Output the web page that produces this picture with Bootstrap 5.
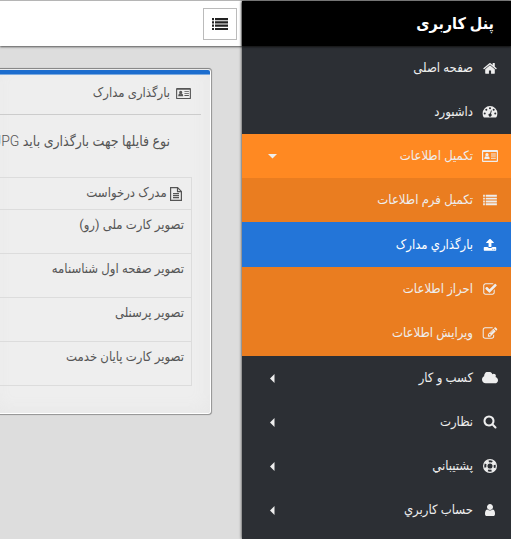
<!DOCTYPE html>
<html lang="fa" dir="rtl">
<head>
<meta charset="utf-8">
<meta name="viewport" content="width=device-width, initial-scale=1">
<title>پنل کاربری</title>
<link href="https://cdn.jsdelivr.net/npm/bootstrap@5.3.0/dist/css/bootstrap.min.css" rel="stylesheet">
<style>
body{font-family:Roboto,"DejaVu Sans Condensed","DejaVu Sans",sans-serif;font-size:13px;line-height:20px;background:#ddd;color:#555;overflow:hidden}
.shell{border-top:1px solid #b5b5b5}
.side{width:269px;background:#2c2f34;box-shadow:0 0 3px #222}
.brand{height:45px;background:#000;color:#fff;font-size:16px;font-weight:700;padding:0 17px;box-shadow:0 1px 2px #111}
.side-link{height:44px;color:#eee;text-decoration:none;padding:0 13px;gap:9px}
.side-link:hover{color:#fff}
.side-link svg{width:16px;height:12px;fill:currentColor}
.side-link .tall-icon{height:14px}
.side-link .caret{width:9px;height:9px;margin-inline-start:auto;margin-inline-end:13px}
.open-item{background:#ff8922}
.sub-menu{background:#ea7d20;padding-bottom:1px}
.current-item{height:45px;background:#2375d8;color:#fff}
.topbar{height:45px;background:#fff;box-shadow:0 1px 2px #555;padding:0 5px}
.toggle-btn{width:34px;height:32px;background:#fff;border:1px solid #bbb;color:#222}
.panel-box{margin:22px 0 0 0;margin-inline-start:30px;background:#eee;border:1px solid #999;border-top-color:#888;border-left:0;border-radius:0 4px 4px 0;box-shadow:inset -1px 0 #fff,inset 0 -1px #fff,inset -4px -4px 16px #e8e8e8,0 0 1px #999;padding-bottom:28px}
.panel-bar{height:5px;background:#1c6dce;border-bottom:1px solid #7ba9de;margin:1px 0 0;margin-inline-start:1px;border-radius:0 2px 0 0}
.panel-title{height:40px;font-size:13px;font-weight:400;border-bottom:1px solid #ccc;margin-inline-start:10px;padding-inline-start:10px;padding-bottom:3px;gap:6px}
.panel-title svg{width:15px;height:13px;fill:currentColor}
.note{font-size:14px;font-weight:300;padding-inline-start:41px;margin:16px 0 26px;white-space:nowrap}
.docs{margin:0;margin-inline-start:19px;width:calc(100% - 19px);border-collapse:collapse}
.docs th,.docs td{border:1px solid #dcdcdc;border-left:0;padding:5px 7px;vertical-align:top;font-weight:400;white-space:nowrap}
.docs th{height:32px;padding:5px 9px}
.docs td{height:44px}
.docs svg{width:12px;height:14px}
</style>
<script src="https://cdn.jsdelivr.net/npm/bootstrap@5.3.0/dist/js/bootstrap.bundle.min.js"></script>
</head>
<body>
<svg class="d-none" aria-hidden="true">
<symbol id="list" viewBox="0 0 16 14"><path d="M0 1h2v2.200H0zM3 1h13v2.200H3zM0 4.300h2v2.200H0zM3 4.300h13v2.200H3zM0 7.600h2v2.200H0zM3 7.600h13v2.200H3zM0 10.900h2v2.200H0zM3 10.900h13v2.200H3z"/></symbol>
<symbol id="idcard" viewBox="0 0 16 14"><path fill-rule="evenodd" d="M1 1h14q1 0 1 1v10q0 1-1 1H1q-1 0-1-1V2q0-1 1-1zM1.200 3v8.800h13.600V3zM5 4.100a1.700 1.700 0 1 1 0 3.400 1.700 1.700 0 0 1 0-3.400zM3.500 7.300q1.500 1 3 0 1.200.5 1.200 2.700H2.300q0-2.200 1.200-2.700zM9 4.500h4.800v1H9zM9 6.600h4.800v1H9zM9 8.700h4.800v1H9z"/></symbol>
<symbol id="home" viewBox="64 128 1664 1440"><path d="M1472 992v480q0 26-19 45t-45 19h-384v-384h-256v384h-384q-26 0-45-19t-19-45v-480q0-1 .5-3t.5-3l575-474 575 474q1 2 1 6zm223-69l-62 74q-8 9-21 11h-3q-13 0-21-7l-692-577-692 577q-12 8-24 7-13-2-21-11l-62-74q-8-10-7-23.500t11-21.500l719-599q32-26 76-26t76 26l244 204v-195q0-14 9-23t23-9h192q14 0 23 9t9 23v408l219 182q10 8 11 21.500t-7 23.500z"/></symbol>
<symbol id="gauge" viewBox="0 1 16 13"><path fill-rule="evenodd" d="M8 1a8 8 0 0 1 8 8q0 2.300-1.200 4.200-.2.300-.6.300H1.800q-.4 0-.6-.3Q0 11.300 0 9a8 8 0 0 1 8-8zM2.300 8a1.100 1.100 0 1 0 0 2.200 1.100 1.100 0 0 0 0-2.200zM4 4a1.100 1.100 0 1 0 0 2.200A1.100 1.100 0 0 0 4 4zM8 2.300a1.100 1.100 0 1 0 0 2.200 1.100 1.100 0 0 0 0-2.200zM12 4a1.100 1.100 0 1 0 0 2.200A1.100 1.100 0 0 0 12 4zM13.700 8a1.100 1.100 0 1 0 0 2.200 1.100 1.100 0 0 0 0-2.200zM9 5.800l-.9 3.300a1.700 1.700 0 1 0 1 .3L10 6z"/></symbol>
<symbol id="upload" viewBox="64 96 1664 1600"><path d="M1344 1472q0-26-19-45t-45-19-45 19-19 45 19 45 45 19 45-19 19-45zm256 0q0-26-19-45t-45-19-45 19-19 45 19 45 45 19 45-19 19-45zm128-224v320q0 40-28 68t-68 28h-1472q-40 0-68-28t-28-68v-320q0-40 28-68t68-28h427q21 56 70.500 92t110.500 36h256q61 0 110.500-36t70.500-92h427q40 0 68 28t28 68zm-325-648q-17 40-59 40h-256v448q0 26-19 45t-45 19h-256q-26 0-45-19t-19-45v-448h-256q-42 0-59-40-17-39 14-69l448-448q18-19 45-19t45 19l448 448q31 30 14 69z"/></symbol>
<symbol id="check" viewBox="0 96 1792 1472"><path d="M1472 930v318q0 119-84.500 203.500t-203.500 84.500h-832q-119 0-203.500-84.500t-84.500-203.500v-832q0-119 84.500-203.500t203.500-84.500h832q63 0 117 25 15 7 18 23 3 17-9 29l-49 49q-10 10-23 10-3 0-9-2-23-6-45-6h-832q-66 0-113 47t-47 113v832q0 66 47 113t113 47h832q66 0 113-47t47-113v-254q0-13 9-22l64-64q10-10 23-10 6 0 12 3 20 8 20 29zm231-489l-814 814q-24 24-57 24t-57-24l-430-430q-24-24-24-57t24-57l110-110q24-24 57-24t57 24l263 263 647-647q24-24 57-24t57 24l110 110q24 24 24 57t-24 57z"/></symbol>
<symbol id="edit" viewBox="0 96 1792 1472"><path d="M888 1184l116-116-152-152-116 116v56h96v96h56zm440-720q-16-16-33 1l-350 350q-17 17-1 33t33-1l350-350q17-17 1-33zm80 594v190q0 119-84.500 203.500t-203.500 84.500h-832q-119 0-203.500-84.500t-84.500-203.500v-832q0-119 84.500-203.500t203.500-84.500h832q63 0 117 25 15 7 18 23 3 17-9 29l-49 49q-14 14-32 8-23-6-45-6h-832q-66 0-113 47t-47 113v832q0 66 47 113t113 47h832q66 0 113-47t47-113v-126q0-13 9-22l64-64q15-15 35-7t20 29zm-96-738l288 288-672 672h-288v-288zm444 132l-92 92-288-288 92-92q28-28 68-28t68 28l152 152q28 28 28 68t-28 68z"/></symbol>
<symbol id="cloud" viewBox="64 256 1920 1280"><path d="M1984 1152q0 159-112.500 271.500t-271.500 112.500h-1088q-185 0-316.500-131.500t-131.500-316.500q0-132 71-241.500t187-163.500q-2-28-2-43 0-212 150-362t362-150q158 0 286.500 88t187.500 230q70-62 166-62 106 0 181 75t75 181q0 75-41 138 129 30 213 134.500t84 239.500z"/></symbol>
<symbol id="search" viewBox="0 64 1792 1792"><path d="M1216 832q0-185-131.500-316.500t-316.500-131.500-316.500 131.500-131.500 316.500 131.500 316.500 316.500 131.500 316.500-131.500 131.500-316.500zm512 832q0 52-38 90t-90 38q-54 0-90-38l-343-342q-179 124-399 124-143 0-273.500-55.500t-225-150-150-225-55.500-273.500 55.500-273.500 150-225 225-150 273.500-55.500 273.500 55.500 225 150 150 225 55.500 273.500q0 220-124 399l343 343q37 37 37 90z"/></symbol>
<symbol id="ring" viewBox="0 0 16 16"><g fill="none" stroke="currentColor"><circle cx="8" cy="8" r="7.300" stroke-width="1.400"/><circle cx="8" cy="8" r="3.600" stroke-width="1.400"/><circle cx="8" cy="8" r="5.500" stroke-width="3.400" stroke-dasharray="4.320 4.320" stroke-dashoffset="-2.160"/></g></symbol>
<symbol id="user" viewBox="192 128 1408 1536"><path d="M1536 1399q0 109-62.500 187t-150.500 78h-854q-88 0-150.500-78t-62.500-187q0-85 8.500-160.500t31.500-152 58.500-131 94-89 134.500-34.500q131 128 313 128t313-128q76 0 134.500 34.500t94 89 58.500 131 31.500 152 8.500 160.500zm-256-887q0 159-112.500 271.500t-271.500 112.500-271.500-112.500-112.500-271.500 112.500-271.500 271.500-112.500 271.500 112.500 112.500 271.500z"/></symbol>
<symbol id="file" viewBox="0 0 12 14"><path fill="none" stroke="currentColor" stroke-width="1.200" d="M.6.600h7l3.800 3.800v9H.6zM7.500.600v4h4M3 6.600h6M3 8.600h6M3 10.600h6"/></symbol>
<symbol id="left" viewBox="0 0 9 9"><path d="M6.500 0v9L2 4.500z"/></symbol>
<symbol id="down" viewBox="0 0 9 9"><path d="M0 2h9L4.500 6.500z"/></symbol>
</svg>
<div class="shell d-flex min-vh-100">
<aside class="side flex-shrink-0 position-relative z-1">
<div class="brand d-flex align-items-center position-relative">پنل کاربری</div>
<nav>
<a class="side-link d-flex align-items-center" href="#"><svg><use href="#home"/></svg>صفحه اصلی</a>
<a class="side-link d-flex align-items-center" href="#"><svg><use href="#gauge"/></svg>داشبورد</a>
<a class="side-link open-item d-flex align-items-center" href="#" aria-expanded="true"><svg class="tall-icon"><use href="#idcard"/></svg>تکمیل اطلاعات<svg class="caret"><use href="#down"/></svg></a>
<div class="sub-menu">
<a class="side-link d-flex align-items-center" href="#"><svg><use href="#list"/></svg>تکمیل فرم اطلاعات</a>
<a class="side-link current-item d-flex align-items-center" href="#" aria-current="page"><svg><use href="#upload"/></svg>بارگذاري مدارک</a>
<a class="side-link d-flex align-items-center" href="#"><svg><use href="#check"/></svg>احراز اطلاعات</a>
<a class="side-link d-flex align-items-center" href="#"><svg><use href="#edit"/></svg>ویرایش اطلاعات</a>
</div>
<a class="side-link d-flex align-items-center" href="#"><svg><use href="#cloud"/></svg>کسب و کار<svg class="caret"><use href="#left"/></svg></a>
<a class="side-link d-flex align-items-center" href="#"><svg class="tall-icon"><use href="#search"/></svg>نظارت<svg class="caret"><use href="#left"/></svg></a>
<a class="side-link d-flex align-items-center" href="#"><svg class="tall-icon"><use href="#ring"/></svg>پشتيباني<svg class="caret"><use href="#left"/></svg></a>
<a class="side-link d-flex align-items-center" href="#"><svg><use href="#user"/></svg>حساب کاربري<svg class="caret"><use href="#left"/></svg></a>
</nav>
</aside>
<div class="flex-grow-1 overflow-hidden">
<header class="topbar d-flex align-items-center"><button class="toggle-btn p-0 d-flex align-items-center justify-content-center" type="button" aria-label="فهرست"><svg width="16" height="14" fill="currentColor"><use href="#list"/></svg></button></header>
<main class="panel-box">
<div class="panel-bar"></div>
<h1 class="panel-title d-flex align-items-center mb-0"><svg><use href="#idcard"/></svg><span>بارگذاری مدارک</span></h1>
<p class="note">نوع فایلها جهت بارگذاری باید JPG</p>
<table class="docs">
<thead><tr><th scope="col"><svg><use href="#file"/></svg> مدرک درخواست</th></tr></thead>
<tbody>
<tr><td>تصویر کارت ملی (رو)</td></tr>
<tr><td>تصویر صفحه اول شناسنامه</td></tr>
<tr><td>تصویر پرسنلی</td></tr>
<tr><td>تصویر کارت پایان خدمت</td></tr>
</tbody>
</table>
</main>
</div>
</div>
</body>
</html>
